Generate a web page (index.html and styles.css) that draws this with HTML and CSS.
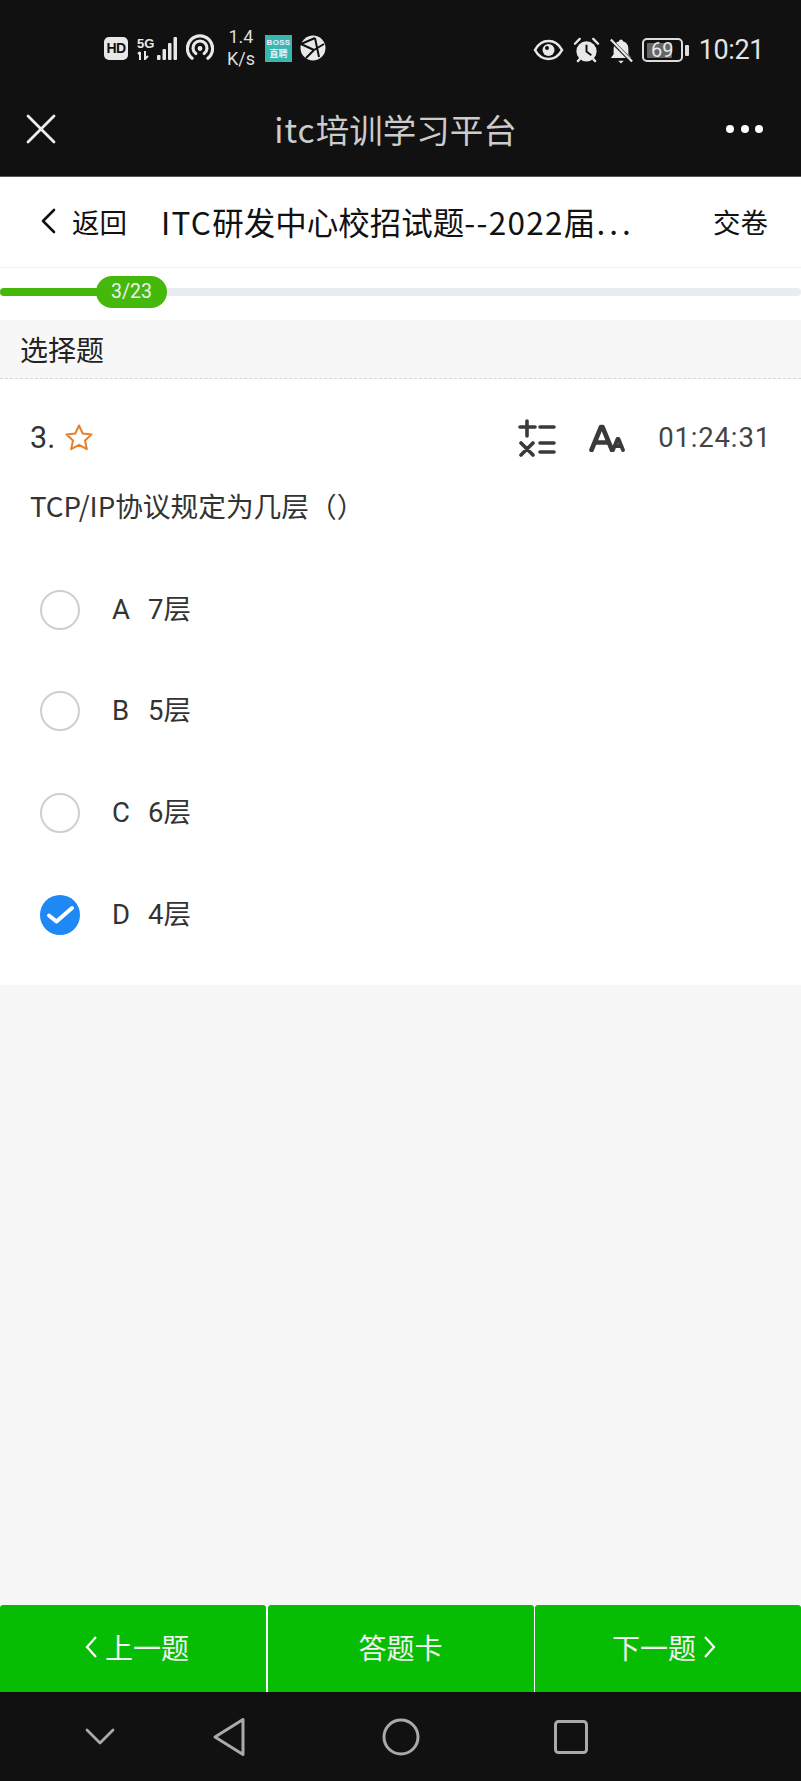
FILE: index.html
```html
<!DOCTYPE html>
<html lang="zh">
<head>
<meta charset="utf-8">
<title>itc培训学习平台</title>
<link rel="stylesheet" href="styles.css">
</head>
<body>
<div class="app">
  <div class="statusbar">
    <div class="status-left">
      <span class="hd">HD</span>
      <div class="signal">
        <div class="net"><span>5G</span><svg width="14" height="9" viewBox="0 0 14 9"><path d="M3 9V1M1 3l2-2M8 0v8l3-3" fill="none" stroke="#e8e8e8" stroke-width="2"/></svg></div>
        <svg width="21" height="23" viewBox="0 0 21 23"><g fill="#e8e8e8"><rect x="0" y="18" width="3.500" height="5" rx="1"/><rect x="5.500" y="12" width="3.500" height="11" rx="1"/><rect x="11" y="6" width="3.500" height="17" rx="1"/><rect x="16.500" y="0" width="3.500" height="23" rx="1"/></g></svg>
      </div>
      <svg class="hotspot" width="28" height="28" viewBox="0 0 30 30" fill="none" stroke="#e8e8e8" stroke-width="3.400" stroke-linecap="round"><path d="M6.500 26a13.500 13.500 0 1 1 17 0"/><path d="M10.500 21a7.500 7.500 0 1 1 9 0"/><circle cx="15" cy="15.500" r="1.800" fill="#e8e8e8" stroke-width="1.600"/></svg>
      <div class="speed"><span>1.4</span><span>K/s</span></div>
      <div class="boss"><span class="boss-en">BOSS</span><span>直聘</span></div>
      <svg class="globe" width="26" height="26" viewBox="0 0 26 26"><circle cx="13" cy="13" r="12.500" fill="#e8e8e8"/><path d="M1 9L15 3M15 3L19 22M1 9L14 15M14 15L24 9M14 15L6 23" stroke="#111" stroke-width="2" fill="none"/></svg>
    </div>
    <div class="status-right">
      <svg width="31" height="22" viewBox="0 0 30 22"><path d="M1.500 11C5 4.500 10 2 15 2s10 2.500 13.500 9C25 17.500 20 20 15 20S5 17.500 1.500 11z" fill="none" stroke="#e8e8e8" stroke-width="2.600"/><circle cx="15" cy="11" r="6" fill="#e8e8e8"/><circle cx="13.500" cy="9" r="2" fill="#111"/></svg>
      <svg width="27" height="27" viewBox="0 0 28 28"><circle cx="14" cy="15" r="10.500" fill="#e8e8e8"/><path d="M14 8v7l5 4" stroke="#111" stroke-width="2" fill="none"/><path d="M2 7l5-5M26 7l-5-5M5 25l2-2M23 25l-2-2" stroke="#e8e8e8" stroke-width="2.400" stroke-linecap="round"/></svg>
      <svg width="24" height="27" viewBox="0 0 26 28"><path d="M13 2c1.200 0 2 .8 2 2 4 1 6 4 6 8v6l3 4H2l3-4v-6c0-4 2-7 6-8 0-1.200.8-2 2-2z" fill="#e8e8e8"/><path d="M10 25h6l-3 3z" fill="#e8e8e8"/><path d="M1 2l24 24" stroke="#111" stroke-width="4"/><path d="M2 2l23 24" stroke="#e8e8e8" stroke-width="2.400"/></svg>
      <div class="battery"><div class="battery-body"><span class="battery-level"></span><span class="battery-num">69</span></div><span class="battery-tip"></span></div>
      <span class="clock">10:21</span>
    </div>
  </div>

  <div class="topnav">
    <svg class="close" width="30" height="30" viewBox="0 0 30 30"><path d="M2 2l26 26M28 2L2 28" stroke="#eee" stroke-width="2.800" stroke-linecap="round"/></svg>
    <div class="topnav-title"><span class="latin-title">itc</span>培训学习平台</div>
    <div class="dots"><i></i><i></i><i></i></div>
  </div>

  <div class="exam-head">
    <a class="back">
      <svg width="16" height="26" viewBox="0 0 16 26"><path d="M14 2L3 13l11 11" fill="none" stroke="#111" stroke-width="2.600" stroke-linecap="round" stroke-linejoin="round"/></svg>
      <span>返回</span>
    </a>
    <div class="exam-title"><span class="latin">ITC</span>研发中心校招试题<span class="latin">--2022</span>届<span class="ellipsis">...</span></div>
    <a class="submit">交卷</a>
  </div>

  <div class="progress">
    <div class="track"><div class="fill"></div></div>
    <div class="pill">3/23</div>
  </div>

  <div class="section">选择题</div>

  <div class="question">
    <div class="q-head">
      <div class="q-no">
        <span>3.</span>
        <svg width="30" height="30" viewBox="0 0 30 30"><path d="M15 2.500l3.700 8 8.800 1-6.500 6 1.800 8.700L15 21.800l-7.800 4.400L9 17.500l-6.500-6 8.800-1z" fill="none" stroke="#e5812c" stroke-width="2" stroke-linejoin="round"/></svg>
      </div>
      <div class="q-tools">
        <svg width="38" height="38" viewBox="0 0 38 38"><path d="M9 2v15M2 8h15M22 8h14M3 24l12 12M15 24L3 36M22 24h14M22 33h14" stroke="#3a3a3a" stroke-width="3.600" stroke-linecap="round"/></svg>
        <svg class="font-size" width="36" height="28" viewBox="0 0 36 28"><path d="M2.500 26L12 3h1.500L23 26M6.500 18.500h12" fill="none" stroke="#3a3a3a" stroke-width="4.600" stroke-linecap="round" stroke-linejoin="round"/><path d="M24 26l4.500-11h1L34 26M25.500 22h7" fill="none" stroke="#3a3a3a" stroke-width="3.800" stroke-linecap="round" stroke-linejoin="round"/></svg>
        <span class="timer">01:24:31</span>
      </div>
    </div>
    <div class="q-text">TCP/IP协议规定为几层（）</div>
    <ul class="options">
      <li class="option"><span class="radio"></span><span class="opt-letter">A</span><span>7层</span></li>
      <li class="option"><span class="radio"></span><span class="opt-letter">B</span><span>5层</span></li>
      <li class="option"><span class="radio"></span><span class="opt-letter">C</span><span>6层</span></li>
      <li class="option"><span class="radio checked"><svg width="40" height="40" viewBox="0 0 40 40"><path d="M9 20.500l7.500 6L32 13" fill="none" stroke="#fff" stroke-width="4" stroke-linecap="round" stroke-linejoin="round"/></svg></span><span class="opt-letter">D</span><span>4层</span></li>
    </ul>
  </div>

  <div class="spacer"></div>

  <div class="actions">
    <a class="action action-prev"><svg width="14" height="24" viewBox="0 0 14 24"><path d="M12 2L3 12l9 10" fill="none" stroke="#fff" stroke-width="2.200"/></svg><span>上一题</span></a>
    <a class="action"><span>答题卡</span></a>
    <a class="action action-next"><span>下一题</span><svg width="14" height="24" viewBox="0 0 14 24"><path d="M2 2l9 10-9 10" fill="none" stroke="#fff" stroke-width="2.200"/></svg></a>
  </div>

  <div class="navbar">
    <svg width="30" height="18" viewBox="0 0 30 18"><path d="M2 2l13 13L28 2" fill="none" stroke="#aaa" stroke-width="2.800" stroke-linecap="round" stroke-linejoin="round"/></svg>
    <svg class="nav-back" width="34" height="40" viewBox="0 0 34 40"><path d="M31 2.500v35L3 20z" fill="none" stroke="#aaa" stroke-width="3" stroke-linejoin="round"/></svg>
    <svg class="nav-home" width="38" height="38" viewBox="0 0 38 38"><circle cx="19" cy="19" r="17" fill="none" stroke="#aaa" stroke-width="3"/></svg>
    <svg class="nav-recent" width="34" height="34" viewBox="0 0 34 34"><rect x="1.500" y="1.500" width="31" height="31" rx="3" fill="none" stroke="#aaa" stroke-width="3"/></svg>
  </div>
</div>
</body>
</html>
```

FILE: styles.css
```css
* { box-sizing: border-box; }
html, body { margin: 0; padding: 0; }
body {
  font-family: "Noto Sans CJK SC", "Noto Sans", sans-serif;
  background: #f7f7f7;
  color: #333;
}
.app {
  width: 801px;
  height: 1781px;
  display: flex;
  flex-direction: column;
  overflow: hidden;
}

/* status bar */
.statusbar {
  height: 86px;
  flex: none;
  background: #111;
  color: #e8e8e8;
  display: flex;
  justify-content: space-between;
  align-items: flex-end;
  padding: 0 37px 20px 104px;
}
.status-left, .status-right { display: flex; align-items: center; }
.status-left { height: 36px; }
.hd {
  width: 24px; height: 23px;
  background: #e8e8e8;
  color: #111;
  border-radius: 5px;
  font: 700 14px/23px "Liberation Sans", sans-serif;
  text-align: center;
  letter-spacing: -0.5px;
  margin-right: 9px;
}
.signal { display: flex; align-items: flex-end; height: 23px; }
.net {
  display: flex; flex-direction: column;
  font: 700 13px/14px "Liberation Sans", sans-serif;
  margin-right: 6px;
  width: 14px;
}
.hotspot { margin-left: 8px; }
.speed {
  display: flex; flex-direction: column; align-items: center;
  font: 400 18px/22px Roboto, sans-serif;
  color: #ddd;
  margin-left: 13px;
  width: 28px;
}
.boss {
  width: 27px; height: 27px;
  background: #39b7ac;
  color: #eef;
  margin-left: 10px;
  display: flex; flex-direction: column; align-items: center; justify-content: center;
  font: 700 9px/11px "Noto Sans CJK SC", sans-serif;
}
.boss-en { font: 700 8px/10px "Liberation Sans", sans-serif; letter-spacing: .3px; }
.globe { margin-left: 8px; }
.status-right { gap: 9px; }
.battery { display: flex; align-items: center; gap: 2px; }
.battery-body {
  width: 41px; height: 24px;
  border: 2px solid #ddd;
  border-radius: 5px;
  position: relative;
  padding: 2.500px 3px;
}
.battery-level { display: block; width: 25px; height: 15px; background: #666; border-radius: 1px; }
.battery-num {
  position: absolute; left: 0; right: 0; top: 0;
  text-align: center;
  font: 400 20px/20px Roboto, sans-serif;
  color: #e8e8e8;
}
.battery-tip { width: 4px; height: 11px; background: #ddd; border-radius: 1px; }
.clock { font: 400 27px/32px Roboto, sans-serif; color: #e4e4e4; margin-left: 1px; letter-spacing: -.4px; }

/* top nav */
.topnav {
  height: 91px;
  flex: none;
  background: #111;
  border-bottom: 1px solid #555;
  display: flex;
  align-items: center;
  justify-content: space-between;
  padding: 0 38px 5px 26px;
  position: relative;
}
.topnav-title {
  position: absolute; left: 0; right: 10px; top: 20px;
  text-align: center;
  font-size: 33.500px;
  line-height: 46px;
  color: #ccc;
}
.latin-title { letter-spacing: 1px; }
.dots { display: flex; gap: 6.500px; }
.dots i { width: 8px; height: 8px; border-radius: 50%; background: #fff; }

/* exam header */
.exam-head {
  height: 91px;
  flex: none;
  background: #fff;
  border-bottom: 1px solid #eee;
  display: flex;
  align-items: center;
  padding: 0 33px 3px 40px;
  color: #111;
}
.back { display: flex; align-items: center; gap: 16px; font-size: 27.500px; width: 121px; flex: none; }
.exam-title { flex: 1; font-size: 31.500px; white-space: nowrap; overflow: hidden; }
.latin { letter-spacing: 1.300px; }
.ellipsis { letter-spacing: 4px; margin-left: 1px; }
.submit { font-size: 27.500px; }

/* progress */
.progress {
  height: 52px;
  flex: none;
  background: #fff;
  position: relative;
  padding-top: 20px;
}
.track { height: 8px; background: #e9edf1; border-radius: 4px; }
.fill { width: 100px; height: 8px; background: #44b80b; border-radius: 4px; }
.pill {
  position: absolute; left: 96px; top: 8px;
  width: 71px; height: 32px;
  border-radius: 16px;
  background: #44b80b;
  color: #eee;
  text-align: center;
  font: 400 19.500px/32px Roboto, sans-serif;
}

/* section */
.section {
  height: 59px;
  flex: none;
  background: #f7f7f7;
  border-bottom: 1px dashed #d6d6d6;
  padding-left: 20px;
  font-size: 28px;
  line-height: 58px;
  color: #222;
}

/* question */
.question { flex: none; background: #fff; height: 606px; padding: 0 30px; }
.q-head { display: flex; justify-content: space-between; align-items: center; height: 90px; padding-top: 28px; }
.q-no { display: flex; align-items: center; gap: 9px; font: 400 30.500px/40px Roboto, sans-serif; }
.q-tools { display: flex; align-items: center; }
.font-size { margin-left: 33px; }
.timer { font: 400 27.500px/36px Roboto, sans-serif; color: #444; margin-left: 33px; letter-spacing: .85px; }
.q-text { font-size: 27.700px; line-height: 40px; margin-top: 16px; color: #333; }
.options { list-style: none; margin: 34px 0 0; padding: 0 0 0 10px; }
.option { height: 101.600px; display: flex; align-items: center; font: 400 27.500px/40px Roboto, "Noto Sans CJK SC", sans-serif; color: #333; }
.radio { width: 40px; height: 40px; border-radius: 50%; border: 2px solid #cfcfcf; margin-right: 32px; flex: none; }
.radio.checked { background: #1e88f5; border: 0; }
.radio svg { display: block; }
.opt-letter { width: 36px; }

.spacer { flex: 1; background: #f7f7f7; }

/* actions */
.actions { height: 87px; flex: none; display: flex; justify-content: space-between; background: #fff; }
.action {
  width: 266px;
  background: #07bd04;
  color: #f2f2f2;
  border-radius: 3px 3px 0 0;
  display: flex; align-items: center; justify-content: center;
  gap: 7px;
  font-size: 28px;
  padding-bottom: 3px;
}
.action-prev { padding-left: 7px; }
.action-next { padding-right: 7px; }

/* nav bar */
.navbar {
  height: 89px; flex: none;
  background: #111;
  display: flex;
  align-items: center;
  padding: 0 0 0 85px;
}
.nav-back { margin-left: 97px; }
.nav-home { margin-left: 136px; }
.nav-recent { margin-left: 134px; }
```
